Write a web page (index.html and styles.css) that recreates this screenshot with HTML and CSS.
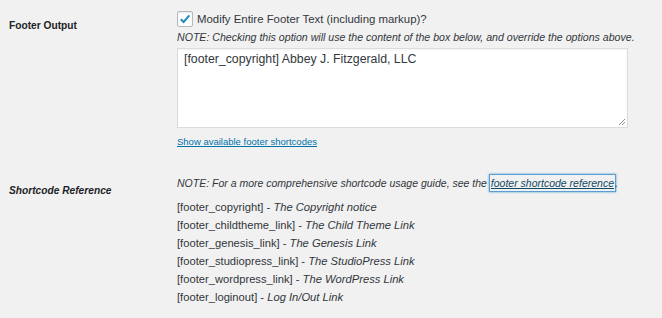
FILE: index.html
```html
<html lang="en">

<head>
    <meta charset="UTF-8">
    <meta name="viewport" content="width=device-width, initial-scale=1.0">
    <title>Footer Settings</title>
    <link rel="stylesheet" href="styles.css">
</head>

<body>
    <div class="settings">
        <div class="setting-row first">
            <div class="setting-label">Footer Output</div>
            <div class="setting-field">
                <label class="check-line">
                    <span class="checkbox">
                        <svg width="14" height="14" viewBox="0 0 14 14">
                            <path d="M2.8 7.2 L5.6 10 L11.4 3.4" fill="none" stroke="#1e8cbe" stroke-width="2" />
                        </svg>
                    </span>
                    Modify Entire Footer Text (including markup)?
                </label>
                <p class="note">NOTE: Checking this option will use the content of the box below, and override the options above.</p>
                <div class="textarea">
                    [footer_copyright] Abbey J. Fitzgerald, LLC
                    <svg class="resize" width="8" height="8" viewBox="0 0 8 8">
                        <path d="M7 1 L1 7 M7 4 L4 7" stroke="#8c8f94" stroke-width="1" />
                    </svg>
                </div>
                <a class="show-link" href="#">Show available footer shortcodes</a>
            </div>
        </div>

        <div class="setting-row second">
            <div class="setting-label italic">Shortcode Reference</div>
            <div class="setting-field">
                <p class="note ref-note">NOTE: For a more comprehensive shortcode usage guide, see the <a class="focus-link" href="#">footer shortcode reference</a>.</p>
                <ul class="shortcodes">
                    <li>[footer_copyright] - <em>The Copyright notice</em></li>
                    <li>[footer_childtheme_link] - <em>The Child Theme Link</em></li>
                    <li>[footer_genesis_link] - <em>The Genesis Link</em></li>
                    <li>[footer_studiopress_link] - <em>The StudioPress Link</em></li>
                    <li>[footer_wordpress_link] - <em>The WordPress Link</em></li>
                    <li>[footer_loginout] - <em>Log In/Out Link</em></li>
                </ul>
            </div>
        </div>
    </div>
</body>

</html>
```

FILE: styles.css
```css
body {
    font-family: "Liberation Sans", Arial, sans-serif;
    background-color: #f1f1f1;
    color: #23282d;
    margin: 0;
}

.setting-row {
    display: flex;
}

.setting-label {
    width: 168px;
    padding-left: 9px;
    font-size: 10.2px;
    font-weight: bold;
    color: #1d2327;
}

.setting-label.italic {
    font-style: italic;
}

.first .setting-label {
    padding-top: 20px;
}

.first .setting-field {
    padding-top: 10px;
}

.second {
    margin-top: 24px;
}

.second .setting-label {
    padding-top: 12px;
}

.check-line {
    display: flex;
    align-items: center;
    gap: 4px;
    height: 17px;
    font-size: 11.4px;
    color: #32373c;
}

.checkbox {
    display: flex;
    align-items: center;
    justify-content: center;
    width: 14px;
    height: 14px;
    border: 1px solid #b4b9be;
    border-radius: 2px;
    background-color: #fff;
    box-shadow: inset 0 1px 2px rgba(0, 0, 0, 0.1);
}

.note {
    margin: 2px 0 0;
    font-size: 10.6px;
    line-height: 16px;
    font-style: italic;
    color: #32373c;
}

.textarea {
    position: relative;
    margin-top: 3px;
    width: 437px;
    height: 74px;
    padding: 2px 6px;
    border: 1px solid #dcdcdc;
    background-color: #fff;
    font-size: 12.3px;
    line-height: 16px;
    color: #32373c;
    box-shadow: inset 0 1px 2px rgba(0, 0, 0, 0.05);
}

.resize {
    position: absolute;
    right: 1px;
    bottom: 1px;
}

.show-link {
    display: block;
    margin-top: 7px;
    font-size: 9.5px;
    line-height: 14px;
    color: #0073aa;
}

.ref-note {
    margin: 0;
    font-size: 10.5px;
    line-height: 20px;
}

.focus-link {
    color: #124964;
    padding: 2px 1px;
    box-shadow: 0 0 0 1px #5b9dd9, 0 0 2px 1px rgba(30, 140, 190, 0.8);
}

.shortcodes {
    list-style: none;
    margin: 5px 0 0;
    padding: 0;
    font-size: 11.2px;
    line-height: 18px;
    color: #32373c;
}
```
